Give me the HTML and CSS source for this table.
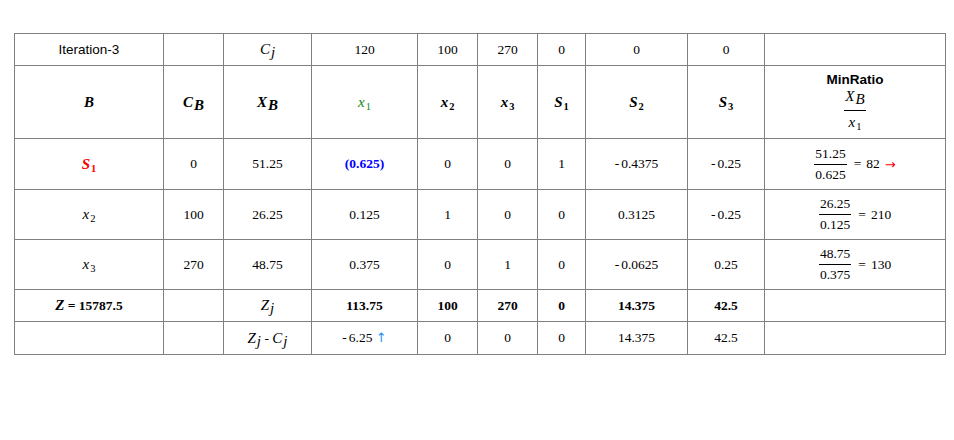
FILE: index.html
```html
<!DOCTYPE html>
<html>
<head>
<meta charset="utf-8">
<link rel="stylesheet" href="styles.css">
</head>
<body>
<table class="tab">
<colgroup>
<col class="c1"><col class="c2"><col class="c3"><col class="c4"><col class="c5"><col class="c6"><col class="c7"><col class="c8"><col class="c9"><col class="c10">
</colgroup>
<tr class="r1">
<td class="sans">Iteration-3</td>
<td></td>
<td><span class="mi">C</span><sub class="mi">j</sub></td>
<td>120</td><td>100</td><td>270</td><td>0</td><td>0</td><td>0</td><td></td>
</tr>
<tr class="r2 hd">
<td><span class="mi">B</span></td>
<td><span class="mi">C</span><sub class="mi">B</sub></td>
<td><span class="mi">X</span><sub class="mi">B</sub></td>
<td class="green nb"><span class="mi">x</span><sub>1</sub></td>
<td><span class="mi">x</span><sub>2</sub></td>
<td><span class="mi">x</span><sub>3</sub></td>
<td><span class="mi">S</span><sub>1</sub></td>
<td><span class="mi">S</span><sub>2</sub></td>
<td><span class="mi">S</span><sub>3</sub></td>
<td>
<div class="minratio">
<div class="sans mrt">MinRatio</div>
<div class="frac hfrac nb"><span class="num"><span class="mi">X</span><sub class="mi">B</sub></span><span class="den"><span class="mi">x</span><sub>1</sub></span></div>
</div>
</td>
</tr>
<tr class="r3">
<td class="red b"><span class="mi">S</span><sub>1</sub></td>
<td>0</td><td>51.25</td>
<td class="blue b">(0.625)</td>
<td>0</td><td>0</td><td>1</td>
<td><span class="neg">-</span>0.4375</td>
<td><span class="neg">-</span>0.25</td>
<td><span class="ratio"><span class="frac"><span class="num">51.25</span><span class="den">0.625</span></span><span class="eq">=</span><span class="val">82</span><span class="rarr">&#8594;</span></span></td>
</tr>
<tr class="r4">
<td><span class="mi">x</span><sub>2</sub></td>
<td>100</td><td>26.25</td><td>0.125</td><td>1</td><td>0</td><td>0</td>
<td>0.3125</td>
<td><span class="neg">-</span>0.25</td>
<td><span class="ratio"><span class="frac"><span class="num">26.25</span><span class="den">0.125</span></span><span class="eq">=</span><span class="val">210</span></span></td>
</tr>
<tr class="r5">
<td><span class="mi">x</span><sub>3</sub></td>
<td>270</td><td>48.75</td><td>0.375</td><td>0</td><td>1</td><td>0</td>
<td><span class="neg">-</span>0.0625</td>
<td>0.25</td>
<td><span class="ratio"><span class="frac"><span class="num">48.75</span><span class="den">0.375</span></span><span class="eq">=</span><span class="val">130</span></span></td>
</tr>
<tr class="r6 b">
<td><span class="mi">Z</span> = 15787.5</td>
<td></td>
<td class="nb"><span class="mi">Z</span><sub class="mi">j</sub></td>
<td>113.75</td><td>100</td><td>270</td><td>0</td><td>14.375</td><td>42.5</td><td></td>
</tr>
<tr class="r7">
<td></td><td></td>
<td><span class="mi">Z</span><sub class="mi">j</sub> - <span class="mi">C</span><sub class="mi">j</sub></td>
<td><span class="neg">-</span>6.25 <span class="uarr">&#8593;</span></td>
<td>0</td><td>0</td><td>0</td><td>14.375</td><td>42.5</td><td></td>
</tr>
</table>
</body>
</html>
```
FILE: styles.css
```css
html, body {
  margin: 0;
  padding: 0;
  background: #fff;
}
body {
  font-family: "Liberation Serif", "Times New Roman", serif;
  font-size: 13.5px;
  color: #000;
}
.tab {
  border-collapse: collapse;
  table-layout: fixed;
  width: 932px;
  margin: 33px 0 0 14px;
}
.tab td {
  border: 1px solid #808080;
  text-align: center;
  vertical-align: middle;
  padding: 0;
}
.c1 { width: 149px; }
.c2 { width: 60px; }
.c3 { width: 88px; }
.c4 { width: 106px; }
.c5 { width: 60px; }
.c6 { width: 60px; }
.c7 { width: 48px; }
.c8 { width: 102px; }
.c9 { width: 77px; }
.c10 { width: 181px; }
.r1 { height: 32px; }
.r2 { height: 73px; }
.r3 { height: 51px; }
.r4 { height: 50px; }
.r5 { height: 50px; }
.r6 { height: 32px; }
.r7 { height: 33px; }
.sans {
  font-family: "Liberation Sans", Arial, sans-serif;
  font-size: 13.5px;
}
.mi {
  font-style: italic;
  font-size: 15px;
}
sub {
  font-size: 10.5px;
  vertical-align: -3px;
  line-height: 0;
  margin-left: 1px;
}
.hd td {
  font-weight: bold;
}
.hd td.nb, .hd .nb, .nb {
  font-weight: normal;
}
.b { font-weight: bold; }
.green { color: #118811; }
.red { color: #ff0000; }
.blue { color: #0000ff; }
.neg { margin-right: 2px; }
.minratio {
  display: flex;
  flex-direction: column;
  align-items: center;
}
.mrt {
  font-weight: bold;
  line-height: 14px;
}
.frac {
  display: inline-flex;
  flex-direction: column;
  align-items: stretch;
  vertical-align: middle;
}
.num {
  display: block;
  padding: 0 1px 2px;
  border-bottom: 1px solid #000;
  line-height: 16px;
}
.den {
  display: block;
  padding: 2px 1px 0;
  line-height: 16px;
}
.hfrac .num {
  padding-bottom: 5px;
  padding-top: 1px;
}
.hfrac .den {
  padding-top: 3px;
}
.ratio {
  display: inline-flex;
  align-items: center;
}
.eq {
  margin-left: 7px;
}
.val {
  margin-left: 5px;
}
.rarr {
  color: #ff0000;
  font-family: "DejaVu Sans", sans-serif;
  font-size: 13px;
  margin-left: 5px;
}
.uarr {
  color: #1e90ff;
  font-family: "DejaVu Sans", sans-serif;
  font-size: 13px;
}
```
